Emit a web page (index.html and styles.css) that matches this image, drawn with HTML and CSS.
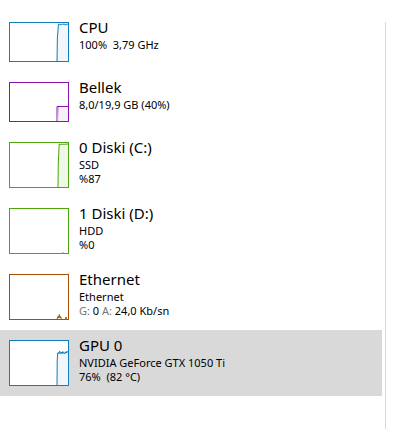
FILE: index.html
```html
<!DOCTYPE html>
<html lang="tr">
<head>
<meta charset="utf-8">
<title>Performans</title>
<link rel="stylesheet" href="styles.css">
</head>
<body>
<div class="page">
  <ul class="list">
    <li class="row">
      <div class="graph cpu">
        <svg viewBox="0 0 58 38" preserveAspectRatio="none"><path d="M47,38.5 L47.4,14 L48.5,1.2 L50,1.2 L50.6,2.2 L51.2,1.2 L55,1.2 L55.6,2.2 L56.2,1.2 L58.5,1.2 L58.5,38.5 Z"/></svg>
      </div>
      <div class="info">
        <div class="title">CPU</div>
        <div class="sub">100%&nbsp; 3,79 GHz</div>
      </div>
    </li>
    <li class="row">
      <div class="graph mem">
        <svg viewBox="0 0 58 38" preserveAspectRatio="none"><path d="M47,38.5 L47,23.5 L58.5,23.5 L58.5,38.5 Z"/><path class="thin" d="M47.5,37 L48.5,24"/></svg>
      </div>
      <div class="info">
        <div class="title">Bellek</div>
        <div class="sub">8,0/19,9 GB (40%)</div>
      </div>
    </li>
    <li class="row">
      <div class="graph disk tall">
        <svg viewBox="0 0 58 44" preserveAspectRatio="none"><path d="M48,44.5 L48.3,20 L49.2,1 L50,1 L50.5,2 L51,1 L52.5,1.3 L58.5,1 L58.5,44.5 Z"/></svg>
      </div>
      <div class="info">
        <div class="title">0 Diski (C:)</div>
        <div class="sub">SSD</div>
        <div class="sub">%87</div>
      </div>
    </li>
    <li class="row">
      <div class="graph disk tall">
        <svg viewBox="0 0 58 44" preserveAspectRatio="none"><path d="M52.5,44.5 L53,43.5 L53.5,44.5 Z"/></svg>
      </div>
      <div class="info">
        <div class="title">1 Diski (D:)</div>
        <div class="sub">HDD</div>
        <div class="sub">%0</div>
      </div>
    </li>
    <li class="row">
      <div class="graph eth tall">
        <svg viewBox="0 0 58 44" preserveAspectRatio="none"><path d="M47,44.5 L48,41.5 L48.6,43 L49.3,39.5 L50,43 L50.6,41.5 L51.5,44.5 Z M55.5,44.5 L56,42 L56.5,44.5 Z"/></svg>
      </div>
      <div class="info">
        <div class="title">Ethernet</div>
        <div class="sub">Ethernet</div>
        <div class="sub"><span class="dim">G:</span> 0 <span class="dim">A:</span> 24,0 Kb/sn</div>
      </div>
    </li>
    <li class="row selected">
      <div class="graph gpu tall">
        <svg viewBox="0 0 58 44" preserveAspectRatio="none"><path d="M47,44.5 L47.2,20 L47.6,13 L48.3,11.5 L48.8,13 L49.6,10 L50.4,12.5 L51.3,11 L52,12.8 L52.8,10.5 L53.6,12 L54.5,13 L55.3,10.8 L56.2,12.2 L57,10.2 L58.5,12 L58.5,44.5 Z"/></svg>
      </div>
      <div class="info">
        <div class="title">GPU 0</div>
        <div class="sub">NVIDIA GeForce GTX 1050 Ti</div>
        <div class="sub">76%&nbsp; (82 °C)</div>
      </div>
    </li>
  </ul>
  <div class="divider"></div>
</div>
</body>
</html>
```

FILE: styles.css
```css
html, body {
  margin: 0;
  padding: 0;
  background: #ffffff;
}

body {
  font-family: "Noto Sans", "Open Sans", sans-serif;
  color: #000000;
}

.page {
  display: flex;
  width: 406px;
  height: 429px;
}

.list {
  list-style: none;
  margin: 0;
  padding: 12px 0 0 0;
  width: 382px;
}

.row {
  display: flex;
  align-items: flex-start;
  padding: 10px 0 10px 9px;
}

.row.selected {
  background: #d9d9d9;
}

.graph {
  box-sizing: border-box;
  width: 60px;
  height: 40px;
  border: 1px solid #117dbb;
  background: #ffffff;
  flex: none;
}

.graph.tall {
  height: 46px;
}

.graph svg {
  display: block;
  width: 100%;
  height: 100%;
  overflow: visible;
}

.graph path {
  stroke-width: 1;
  vector-effect: non-scaling-stroke;
}

.cpu, .gpu { border-color: #117dbb; }
.cpu path, .gpu path { fill: #f1f6fa; stroke: #117dbb; }

.mem { border-color: #8b12ae; }
.mem path { fill: #f4f2f4; stroke: #8b12ae; }
.mem path.thin { fill: none; stroke: #c9a6d6; }

.disk { border-color: #4da60c; }
.disk path { fill: #eff7e9; stroke: #4da60c; }

.eth { border-color: #a74f01; }
.eth path { fill: #fcf3eb; stroke: #a74f01; }

.info {
  margin-left: 10px;
  margin-top: -5px;
}

.title {
  font-size: 15px;
  line-height: 20px;
  margin-bottom: 1px;
  white-space: nowrap;
}

.sub {
  font-size: 11px;
  line-height: 14px;
  white-space: nowrap;
}

.dim {
  color: #767676;
}

.divider {
  width: 1px;
  margin-left: 3px;
  margin-top: 22px;
  background: #d9d9d9;
  align-self: stretch;
}
```
